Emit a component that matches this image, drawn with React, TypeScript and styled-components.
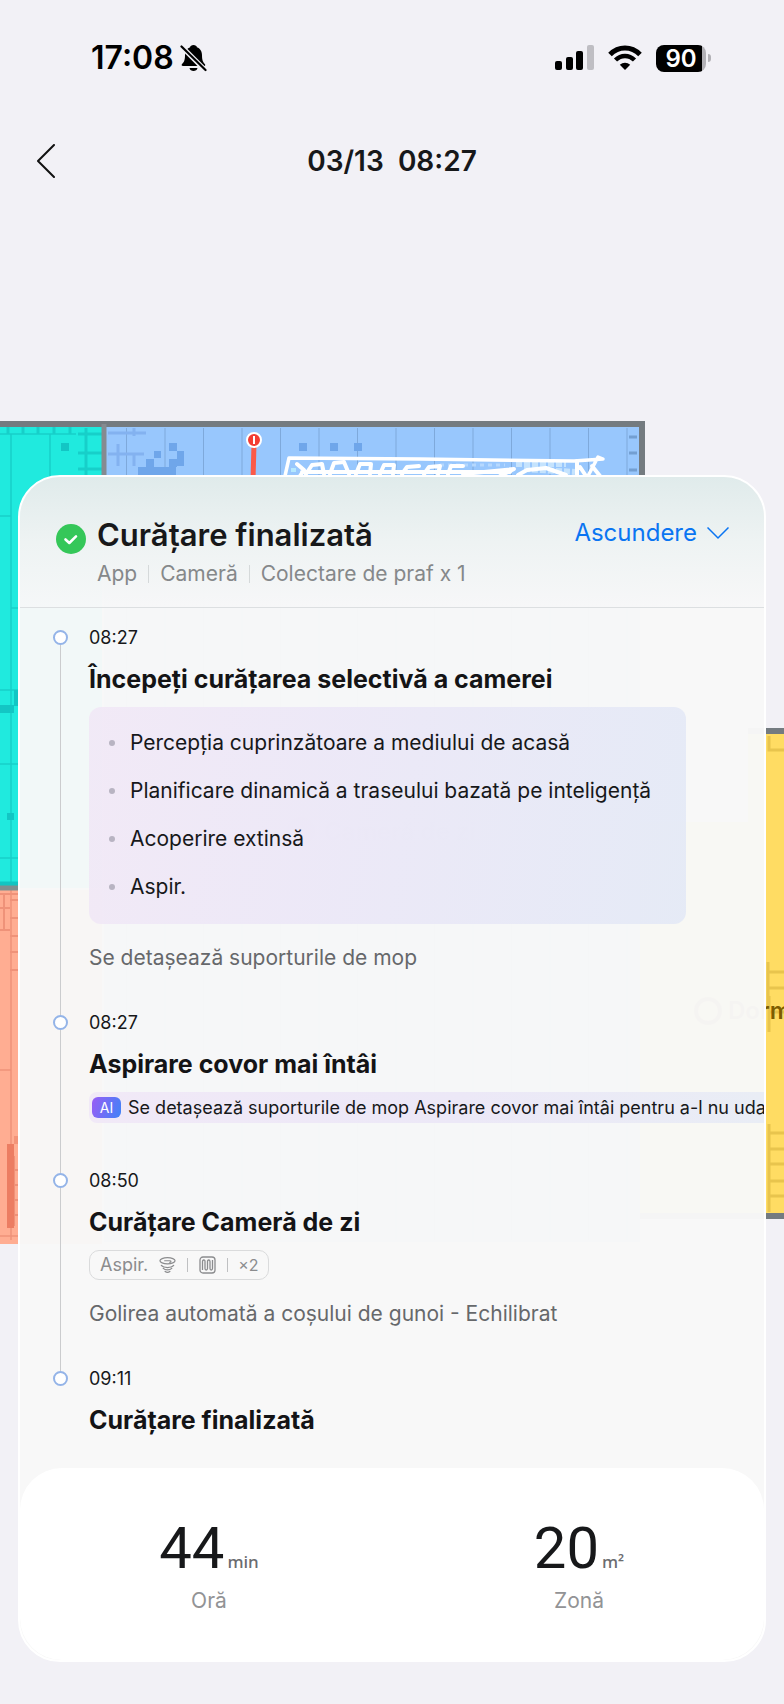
import React from "react";
import styled, { createGlobalStyle } from "styled-components";

const GlobalStyle = createGlobalStyle`
  * { box-sizing: border-box; }
  body {
    margin: 0;
    background: #f2f1f6;
    color: #17181a;
    font-family: Inter, "Liberation Sans", sans-serif;
  }
  button { font: inherit; border: 0; background: none; padding: 0; cursor: pointer; }
  h1, h2, h3, p, ul, ol, dl, dd { margin: 0; padding: 0; }
  ul, ol { list-style: none; }
`;

const Screen = styled.div`
  position: relative;
  overflow: hidden;
  padding-bottom: 43px;
`;

const StatusBar = styled.div`
  display: flex;
  align-items: center;
  justify-content: space-between;
  height: 116px;
  padding: 0 73px 0 91px;
`;

const Clock = styled.div`
  display: flex;
  align-items: center;
  gap: 6px;
  color: #000;
  font-size: 32px;
  line-height: 36px;
  font-weight: 600;
`;

const StatusIcons = styled.div`
  display: flex;
  align-items: center;
  gap: 14px;
`;

const Battery = styled.div`
  display: flex;
  align-items: center;
  gap: 2px;
`;

const BatteryLevel = styled.div`
  width: 50px;
  height: 27px;
  border-radius: 8px;
  background: linear-gradient(90deg, #000 46px, #b2b1b6 46px);
  color: #fff;
  font-size: 24px;
  line-height: 27px;
  font-weight: 600;
  text-align: center;
`;

const BatteryTip = styled.div`
  width: 3px;
  height: 8px;
  border-radius: 0 3px 3px 0;
  background: #b2b1b6;
`;

const NavBar = styled.header`
  display: grid;
  grid-template-columns: 40px 1fr 40px;
  align-items: center;
  height: 90px;
  padding: 0 26px;
`;

const BackButton = styled.button`
  display: flex;
  justify-content: center;
  color: #111;
`;

const NavTitle = styled.h1`
  font-size: 28px;
  line-height: 36px;
  font-weight: 600;
  text-align: center;
  white-space: pre;
`;

const MapLayer = styled.svg`
  position: absolute;
  top: 420px;
  left: 0;
  width: 100%;
  height: auto;
`;

const Card = styled.main`
  position: relative;
  margin: 269px 18px 0;
  border: 2px solid #fff;
  border-radius: 42px;
  overflow: hidden;
  background: rgba(248, 248, 248, 0.975);
`;

const CardHeader = styled.header`
  display: flex;
  align-items: flex-start;
  padding: 38px 35px 19px 36px;
  border-bottom: 1px solid #dcdfe1;
  background: linear-gradient(180deg, #e0ebeb 0%, #eef3f3 50%, rgba(247, 247, 248, 0.6) 100%);
`;

const DoneIcon = styled.svg`
  flex: none;
  margin: 9px 11px 0 0;
`;

const HeaderText = styled.div`
  flex: 1;
`;

const CardTitle = styled.h2`
  font-size: 31px;
  line-height: 40px;
  font-weight: 600;
`;

const Tags = styled.ul`
  display: flex;
  align-items: center;
  margin-top: 5px;
  color: #85888a;
  font-size: 21px;
  line-height: 28px;
`;

const Tag = styled.li`
  display: flex;
  align-items: center;

  & + &::before {
    content: "";
    width: 1px;
    height: 18px;
    margin: 0 11px;
    background: #d5d9da;
  }
`;

const HideButton = styled.button`
  display: flex;
  align-items: center;
  gap: 10px;
  color: #0a75f2;
  font-size: 24px;
  line-height: 36px;
`;

const Timeline = styled.ol`
  padding: 22px 0 34px 33px;
`;

const Step = styled.li<{ $tail?: number }>`
  display: grid;
  grid-template-columns: 15px minmax(0, 1fr);
  column-gap: 21px;

  & > div:last-child {
    padding-bottom: ${(p) => p.$tail ?? 43}px;
  }
`;

const Rail = styled.div`
  display: flex;
  flex-direction: column;
  align-items: center;
`;

const Dot = styled.span`
  flex: none;
  width: 15px;
  height: 15px;
  border: 2px solid #94b4e8;
  border-radius: 50%;
  background: #fff;
`;

const Line = styled.span`
  flex: 1;
  width: 1px;
  background: #cbccce;
`;

const StepBody = styled.div``;

const Time = styled.time`
  display: block;
  font-size: 18px;
  line-height: 15px;
`;

const StepTitle = styled.h3`
  margin-top: 20px;
  font-size: 25px;
  line-height: 28px;
  font-weight: 700;
  color: #141416;
`;

const PlanList = styled.ul`
  margin: 14px 78px 0 0;
  padding: 12px 20px 13px;
  border-radius: 12px;
  background: linear-gradient(100deg, rgba(241, 231, 246, 0.85), rgba(235, 230, 247, 0.85) 40%, rgba(226, 232, 246, 0.85));
`;

const PlanItem = styled.li`
  display: flex;
  align-items: center;
  gap: 15px;
  height: 48px;
  font-size: 21px;
  line-height: 28px;
  white-space: nowrap;

  &::before {
    content: "";
    flex: none;
    width: 6px;
    height: 6px;
    border-radius: 50%;
    background: #b8b4c2;
  }
`;

const Note = styled.p`
  margin-top: 20px;
  color: #66686b;
  font-size: 21px;
  line-height: 28px;
`;

const AiRow = styled.p`
  display: flex;
  align-items: center;
  gap: 7px;
  height: 31px;
  margin-top: 14px;
  padding-left: 3px;
  overflow: hidden;
  border-radius: 8px 0 0 8px;
  background: linear-gradient(90deg, #f1e9f7, #ece8f7 55%, #e9edf5);
  font-size: 18px;
  line-height: 24px;
  white-space: nowrap;
`;

const AiBadge = styled.span`
  flex: none;
  width: 29px;
  height: 21px;
  border-radius: 6px;
  background: linear-gradient(110deg, #9a5cf5, #3f84f7);
  color: #fff;
  font-size: 14px;
  line-height: 21px;
  text-align: center;
`;

const ModeChip = styled.div`
  display: inline-flex;
  align-items: center;
  height: 30px;
  margin-top: 14px;
  padding: 0 10px;
  border: 1px solid #dadbdc;
  border-radius: 10px;
  color: #8b8c8e;
  font-size: 18px;
  line-height: 24px;
  vertical-align: top;
`;

const ChipIcon = styled.svg`
  margin-left: 11px;
`;

const ChipBar = styled.span`
  width: 1px;
  height: 14px;
  margin-left: 11px;
  background: #bfc0c2;
`;

const ChipCount = styled.span`
  margin-left: 10px;
  font-size: 16px;
`;

const Totals = styled.dl`
  display: grid;
  grid-template-columns: 1fr 1fr;
  padding: 44px 0 45px 4px;
  border-radius: 42px;
  background: #fff;
`;

const Total = styled.div`
  display: flex;
  flex-direction: column-reverse;
  align-items: center;
  gap: 3px;
`;

const TotalLabel = styled.dt`
  color: #929395;
  font-size: 21px;
  line-height: 28px;
`;

const TotalValue = styled.dd`
  display: flex;
  align-items: baseline;
  gap: 3px;
  font-family: Roboto, "Liberation Sans", sans-serif;
  font-size: 58px;
  line-height: 72px;
`;

const Unit = styled.span`
  color: #6b6c6f;
  font-family: "Noto Sans", sans-serif;
  font-size: 17px;
  line-height: 24px;
  font-weight: 500;
`;

const range = (n: number) => Array.from({ length: n }, (_, i) => i);

function FloorMap() {
  return (
    <MapLayer viewBox="0 0 784 830" aria-hidden="true">
      {/* hall */}
      <rect x="0" y="6" width="102" height="462" fill="#20eade" />
      <g stroke="#17cfc9" strokeWidth="1.5" fill="none">
        <path d="M0 14H76M11 14V466M50 14V60M0 96H11M11 188H18M0 270H18M0 344H18M0 438H18" />
        <path d="M78 14H102M78 33H102M78 49H102M86 8V56" strokeWidth="3" />
        <path d="M8 6V14M23 6V14M38 6V14M54 6V14M70 6V14" strokeWidth="3" />
      </g>
      <path d="M61 23h8v8h-8zM0 285h14v8h-14zM14 270h4v16h-4zM7 393h7v7h-7z" fill="#13c6c4" />
      <path d="M0 464H18" stroke="#12c5c2" strokeWidth="5" />
      {/* kitchen */}
      <rect x="0" y="470" width="102" height="354" fill="#ffad92" />
      <g stroke="#ef9279" strokeWidth="2" fill="none">
        <path d="M0 474H18M0 488H10M10 480H18M10 498H18M0 510H10M10 516H18M10 532H18M10 550H18M4 474V510" />
        <path d="M11 470V820M0 650H11M0 816H18" strokeWidth="1.5" />
        <path d="M14 736V806M14 750H18M14 765H18M14 780H18M14 795H18" />
      </g>
      <path d="M7 724h7v84h-7z" fill="#ec7d62" />
      <path d="M14 716h4v8h-4z" fill="#f39479" />
      {/* living room */}
      <rect x="104" y="6" width="536" height="816" fill="#98c7fd" />
      <g stroke="#7ea9db" strokeWidth="1">
        {range(14).map((i) => (
          <path key={i} d={`M${126.5 + i * 38.5} 8V820`} />
        ))}
      </g>
      <path d="M108 13H146M108 34H144M118 24V46M134 8V16M134 34V46" stroke="#83b2f0" strokeWidth="3" fill="none" />
      <path
        d="M169 23h8v8h-8zM154 31h7v7h-7zM177 31h7v15h-7zM146 39h8v8h-8zM169 39h8v8h-8zM138 47h38v8h-38zM299 23h8v8h-8zM330 23h8v8h-8zM354 23h8v8h-8z"
        fill="#6fa6ea"
      />
      <path d="M629 17h8M629 33h8M629 50h8" stroke="#739fd2" strokeWidth="3" />
      {/* carpet pattern and the cleaning trace over it */}
      <path d="M440 64H510" stroke="#c5e3fd" strokeWidth="3" strokeDasharray="5 4" fill="none" />
      <path d="M440 45H505" stroke="#b5d8fe" strokeWidth="3" strokeDasharray="4 4" fill="none" />
      <path d="M516 44H566M524 49L575 52" stroke="#c5e3fd" strokeWidth="6" strokeDasharray="6 2" fill="none" />
      <path d="M291 50H296" stroke="#b5e8fe" strokeWidth="4" />
      <g stroke="#fff" strokeWidth="4" fill="none" strokeLinejoin="round" strokeLinecap="round">
        <path d="M285 56L289 38L420 39L574 41L603 39L598 37L588 56" strokeWidth="3.5" />
        <path d="M297 44L304 50L300 56M302 52H510" />
        <path d="M306 54L312 45L322 44L324 54M330 54L334 43L344 42L349 54M356 54L360 44L371 44L370 54M380 54L384 45L394 45L393 54M402 54L407 47L419 46M424 54L429 47L440 46L438 54M448 54L451 46L463 46M463 54L514 49L500 56" />
        <path d="M518 55L527 50L546 48L566 55M577 41V56M580 47L586 56M592 46L600 56" />
      </g>
      {/* bedroom */}
      <rect x="640" y="314" width="144" height="480" fill="#ffdc63" />
      <rect x="640" y="180" width="108" height="222" fill="#f2f1f6" />
      <g stroke="#e8c44d" strokeWidth="3" fill="none">
        <path d="M769 316V330H784M768 542V588M768 552H784M768 568H784" />
        <path d="M769 576V612M769 592H784" />
        <path d="M769 704V792M769 713H784M769 729H784M769 744H784M769 761H784M769 776H784" />
      </g>
      {/* walls */}
      <g stroke="#747b80" strokeWidth="6" fill="none">
        <path d="M0 4H642V58" />
        <path d="M104 4V58" strokeWidth="5" stroke="#858b90" />
        <path d="M748 311H784M640 796H784" />
        <path d="M0 468H18" stroke="#7f8f8f" strokeWidth="5" />
      </g>
      {/* no-go line marker */}
      <path d="M254 24L253 60" stroke="#fb5a49" strokeWidth="5" />
      <circle cx="254" cy="20" r="7" fill="#f33d34" stroke="#fff" strokeWidth="2" />
      <path d="M254 16V24" stroke="#fff" strokeWidth="2" />
      {/* room labels */}
      <g fontFamily="Inter, sans-serif" fontSize="24" fontWeight="600">
        <circle cx="301" cy="411" r="14" fill="#4b6d98" />
        <text x="324" y="420" fill="#2e4f7c">Cameră de zi</text>
        <circle cx="708" cy="591" r="12" fill="none" stroke="#8a6a10" strokeWidth="4" />
        <text x="728" y="599" fill="#7d5c00">Dormitor</text>
      </g>
    </MapLayer>
  );
}

function BellOff() {
  return (
    <svg width="27" height="28" viewBox="0 0 27 28" fill="#000" aria-label="Silențios">
      <path d="M13.500 1C15.500 1 16.700 2 16.900 3.200C20.500 4.500 22 7.600 22 11.200C22 16.500 23 18 25 20.200C25.600 21.200 25 22 24 22H3C1.800 22 1.200 21 2 20C4 18 5 16 5 11.200C5 7.600 6.600 4.500 10.100 3.200C10.300 2 11.500 1 13.500 1Z" />
      <path d="M9.500 24H17.500C17 26.200 15.500 27 13.500 27C11.500 27 10 26.200 9.500 24Z" />
      <path d="M1 2L26 27" stroke="#f2f1f6" strokeWidth="5" />
      <path d="M1.500 2.500L25.500 26" stroke="#000" strokeWidth="2.2" strokeLinecap="round" />
    </svg>
  );
}

function Signal() {
  return (
    <svg width="39" height="26" viewBox="0 0 39 26" aria-label="Semnal">
      <rect x="0" y="16" width="7" height="9" rx="2" />
      <rect x="11" y="12" width="7" height="13" rx="2" />
      <rect x="21" y="6" width="7" height="19" rx="2" />
      <rect x="32" y="0" width="7" height="25" rx="2" fill="#bfbec3" />
    </svg>
  );
}

function Wifi() {
  return (
    <svg width="34" height="26" viewBox="0 0 34 26" fill="none" stroke="#000" aria-label="Wi-Fi">
      <path d="M2 9.500C10.500 .8 23.500 .8 32 9.500" strokeWidth="5" />
      <path d="M7.500 15C13 9.600 21 9.600 26.500 15" strokeWidth="4.500" />
      <path d="M17 25L11.800 19.700C14.800 17 19.200 17 22.200 19.700Z" fill="#000" stroke="none" />
    </svg>
  );
}

interface StepData {
  time: string;
  title: string;
  content?: React.ReactNode;
  tail?: number;
}

const steps: StepData[] = [
  {
    time: "08:27",
    title: "Începeți curățarea selectivă a camerei",
    content: (
      <>
        <PlanList>
          <PlanItem>Percepția cuprinzătoare a mediului de acasă</PlanItem>
          <PlanItem>Planificare dinamică a traseului bazată pe inteligență</PlanItem>
          <PlanItem>Acoperire extinsă</PlanItem>
          <PlanItem>Aspir.</PlanItem>
        </PlanList>
        <Note>Se detașează suporturile de mop</Note>
      </>
    ),
  },
  {
    time: "08:27",
    title: "Aspirare covor mai întâi",
    tail: 50,
    content: (
      <AiRow>
        <AiBadge>AI</AiBadge>
        Se detașează suporturile de mop Aspirare covor mai întâi pentru a-l nu uda
      </AiRow>
    ),
  },
  {
    time: "08:50",
    title: "Curățare Cameră de zi",
    content: (
      <>
        <ModeChip>
          Aspir.
          <ChipIcon width="17" height="18" viewBox="0 0 18 18" fill="none" stroke="#8b8c8e" strokeWidth="1.300" strokeLinecap="round">
            <ellipse cx="9" cy="4.500" rx="8" ry="3.200" />
            <path d="M6 4.500H11.500C13 4.500 13 6 11.500 6.200M2.500 9.500C5 12.400 13 12.400 15.500 9.500M4.500 12.600C6.500 14.600 11.500 14.600 13.500 12.600M6.500 15.800C8 17 10 17 11.500 15.800" />
          </ChipIcon>
          <ChipBar />
          <ChipIcon width="17" height="18" viewBox="0 0 17 18" fill="none" stroke="#8b8c8e" strokeWidth="1.300">
            <rect x="1" y="1" width="15" height="16" rx="3" />
            <path d="M3.500 14V5.500Q3.500 4 4.800 4T6 5.500V12.500Q6 14 7.200 14T8.500 12.500V5.500Q8.500 4 9.700 4T11 5.500V12.500Q11 14 12.200 14T13.500 12.500V4" />
          </ChipIcon>
          <ChipBar />
          <ChipCount>×2</ChipCount>
        </ModeChip>
        <Note>Golirea automată a coșului de gunoi - Echilibrat</Note>
      </>
    ),
  },
  { time: "09:11", title: "Curățare finalizată", tail: 0 },
];

export default function App() {
  return (
    <>
      <GlobalStyle />
      <Screen>
        <FloorMap />
        <StatusBar>
          <Clock>
            17:08
            <BellOff />
          </Clock>
          <StatusIcons>
            <Signal />
            <Wifi />
            <Battery>
              <BatteryLevel>90</BatteryLevel>
              <BatteryTip />
            </Battery>
          </StatusIcons>
        </StatusBar>
        <NavBar>
          <BackButton aria-label="Înapoi">
            <svg width="18" height="34" viewBox="0 0 18 34" fill="none" stroke="currentColor" strokeWidth="2" strokeLinecap="round" strokeLinejoin="round">
              <path d="M17 1L1 17L17 33" />
            </svg>
          </BackButton>
          <NavTitle>{"03/13  08:27"}</NavTitle>
        </NavBar>
        <Card>
          <CardHeader>
            <DoneIcon width="30" height="30" viewBox="0 0 30 30" fill="none">
              <circle cx="15" cy="15" r="15" fill="#35c759" />
              <path d="M9.500 15.500L13.300 19L20 12.300" stroke="#fff" strokeWidth="2.600" strokeLinecap="round" strokeLinejoin="round" />
            </DoneIcon>
            <HeaderText>
              <CardTitle>Curățare finalizată</CardTitle>
              <Tags>
                <Tag>App</Tag>
                <Tag>Cameră</Tag>
                <Tag>Colectare de praf x 1</Tag>
              </Tags>
            </HeaderText>
            <HideButton>
              Ascundere
              <svg width="22" height="12" viewBox="0 0 22 12" fill="none" stroke="currentColor" strokeWidth="1.500" strokeLinejoin="round">
                <path d="M.5 .5L11 11L21.500 .5" />
              </svg>
            </HideButton>
          </CardHeader>
          <Timeline>
            {steps.map((step, i) => (
              <Step key={i} $tail={step.tail}>
                <Rail>
                  <Dot />
                  {i < steps.length - 1 && <Line />}
                </Rail>
                <StepBody>
                  <Time>{step.time}</Time>
                  <StepTitle>{step.title}</StepTitle>
                  {step.content}
                </StepBody>
              </Step>
            ))}
          </Timeline>
          <Totals>
            <Total>
              <TotalLabel>Oră</TotalLabel>
              <TotalValue>
                44<Unit>min</Unit>
              </TotalValue>
            </Total>
            <Total>
              <TotalLabel>Zonă</TotalLabel>
              <TotalValue>
                20<Unit>m²</Unit>
              </TotalValue>
            </Total>
          </Totals>
        </Card>
      </Screen>
    </>
  );
}
